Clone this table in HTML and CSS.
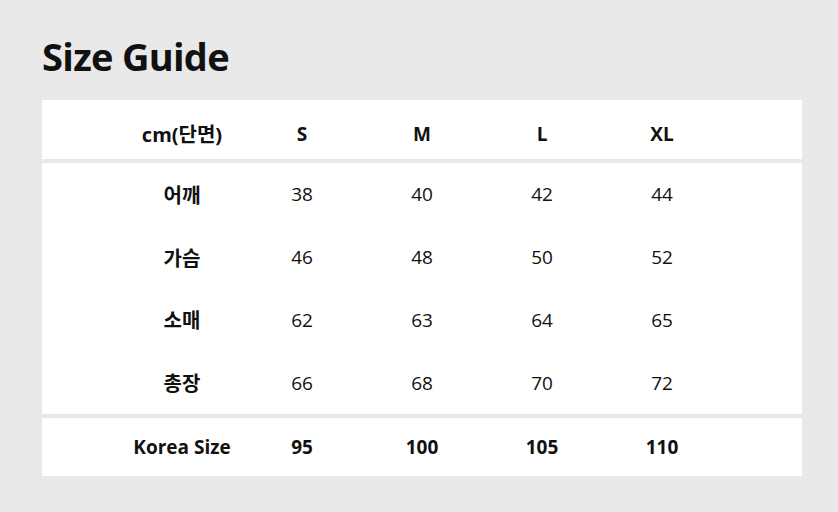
FILE: index.html
```html
<!DOCTYPE html>
<html lang="ko">
<head>
<meta charset="utf-8">
<title>Size Guide</title>
<link rel="stylesheet" href="styles.css">
</head>
<body>
<main class="page">
  <h1 class="title">Size Guide</h1>
  <div class="chart">
    <div class="section head">
      <div class="row">
        <div class="cell label">cm(단면)</div>
        <div class="cell">S</div>
        <div class="cell">M</div>
        <div class="cell">L</div>
        <div class="cell">XL</div>
      </div>
    </div>
    <div class="section body">
      <div class="row">
        <div class="cell label">어깨</div>
        <div class="cell">38</div><div class="cell">40</div><div class="cell">42</div><div class="cell">44</div>
      </div>
      <div class="row">
        <div class="cell label">가슴</div>
        <div class="cell">46</div><div class="cell">48</div><div class="cell">50</div><div class="cell">52</div>
      </div>
      <div class="row">
        <div class="cell label">소매</div>
        <div class="cell">62</div><div class="cell">63</div><div class="cell">64</div><div class="cell">65</div>
      </div>
      <div class="row">
        <div class="cell label">총장</div>
        <div class="cell">66</div><div class="cell">68</div><div class="cell">70</div><div class="cell">72</div>
      </div>
    </div>
    <div class="section foot">
      <div class="row">
        <div class="cell label">Korea Size</div>
        <div class="cell">95</div><div class="cell">100</div><div class="cell">105</div><div class="cell">110</div>
      </div>
    </div>
  </div>
</main>
</body>
</html>
```

FILE: styles.css
```css
html, body {
  margin: 0;
  padding: 0;
  background: #e9e9e9;
}
body {
  font-family: "Open Sans", "Noto Sans CJK KR", sans-serif;
  color: #111;
}
.page {
  padding: 31px 36px 0 42px;
  width: 760px;
}
.title {
  margin: 0;
  font-size: 38px;
  line-height: 50px;
  font-weight: 700;
  letter-spacing: -0.7px;
}
.chart {
  margin-top: 19px;
  display: flex;
  flex-direction: column;
  gap: 4px;
}
.section {
  background: #fff;
  padding: 0 80px;
}
.row {
  display: grid;
  grid-template-columns: repeat(5, 120px);
  align-items: center;
}
.cell {
  text-align: center;
  font-size: 19px;
  font-weight: 400;
}
.head .row {
  height: 59px;
  padding-top: 8px;
  box-sizing: border-box;
}
.head .cell {
  font-weight: 700;
  font-size: 19px;
}
.head .label {
  font-size: 20px;
}
.body .row {
  height: 62.75px;
}
.body .label {
  font-family: "Noto Sans CJK KR", sans-serif;
  font-weight: 700;
  font-size: 20px;
}
.foot .row {
  height: 58px;
}
.foot .cell {
  font-weight: 700;
  font-size: 19px;
}
```
